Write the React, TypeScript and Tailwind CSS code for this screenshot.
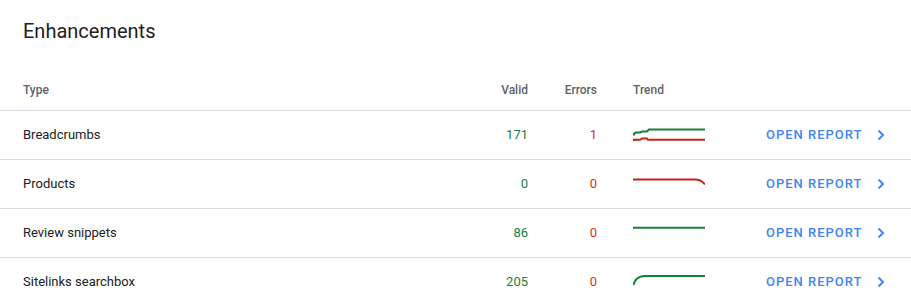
import React from "react";

type Row = {
  type: string;
  valid: number;
  errors: number;
  trend: React.ReactNode;
};

const GREEN = "#188038";
const RED = "#c5221f";

const rows: Row[] = [
  {
    type: "Breadcrumbs",
    valid: 171,
    errors: 1,
    trend: (
      <>
        <path d="M1 24.5 L1 22.5 L3 21.5 L7 21.5 L9 20.5 L14 20.5 L16 18.5 L72 18.5" stroke={GREEN} />
        <path d="M1 30 L1 28.8 L7 28.8 L9 27.5 L14 27.5 L15 28.8 L72 28.8" stroke={RED} />
      </>
    ),
  },
  {
    type: "Products",
    valid: 0,
    errors: 0,
    trend: <path d="M0 19.5 L62 19.5 Q68 19.5 72 24.5" stroke={RED} />,
  },
  {
    type: "Review snippets",
    valid: 86,
    errors: 0,
    trend: <path d="M0 18.7 L72 18.7" stroke={GREEN} />,
  },
  {
    type: "Sitelinks searchbox",
    valid: 205,
    errors: 0,
    trend: <path d="M0.5 27 Q2 19 11 18 L72 18" stroke={GREEN} />,
  },
];

const Chevron = () => (
  <svg width="8" height="12" viewBox="0 0 8 12" fill="none">
    <path d="M1.5 1.5 L6 6 L1.5 10.5" stroke="#4285f4" strokeWidth="2" />
  </svg>
);

export default function App() {
  return (
    <div className="w-[911px] h-[306px] overflow-hidden bg-white font-['Roboto',sans-serif] text-[#202124]">
      <h2 className="pl-[23px] pt-[17px] text-[20px] leading-[28px] font-normal text-[#202124]">
        Enhancements
      </h2>

      {/* header row */}
      <div className="mt-[35px] mb-[10px] flex items-center h-[20px] pl-[23px] text-[12px] font-medium text-[#5f6368]">
        <div className="w-[425px]">Type</div>
        <div className="w-[80px] text-right">Valid</div>
        <div className="w-[69px] text-right">Errors</div>
        <div className="ml-[36px] w-[72px]">Trend</div>
      </div>

      {rows.map((row) => (
        <div
          key={row.type}
          className="flex items-center h-[49px] border-t border-[#dadce0] pl-[23px] text-[13px]"
        >
          <div className="w-[425px]">{row.type}</div>
          <div className="w-[80px] text-right text-[#188038]">{row.valid}</div>
          <div className="w-[69px] text-right text-[#d93025]">{row.errors}</div>
          <div className="ml-[36px] w-[72px] h-[48px]">
            <svg width="72" height="48" viewBox="0 0 72 48" fill="none" strokeWidth="2">
              {row.trend}
            </svg>
          </div>
          <div className="ml-[61px] flex items-center gap-[14px] text-[13px] font-medium tracking-[1px] text-[#4285f4]">
            <span>OPEN REPORT</span>
            <Chevron />
          </div>
        </div>
      ))}
    </div>
  );
}
